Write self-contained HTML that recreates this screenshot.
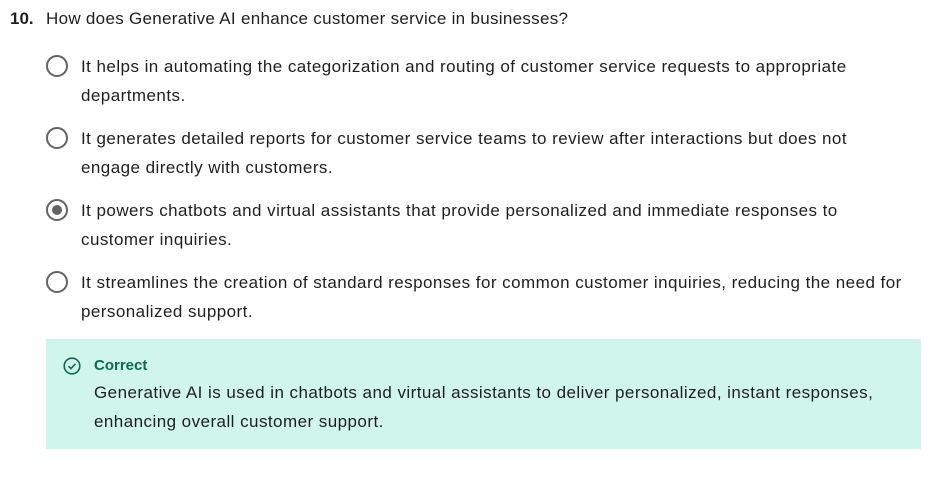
<!DOCTYPE html>
<html><head><style>
body{margin:0;width:939px;height:478px;background:#fff;font-family:"Liberation Sans",sans-serif;color:#1f1f1f;font-size:17px;letter-spacing:0.45px;position:relative;overflow:hidden}
.a{position:absolute;white-space:nowrap}
.r{position:absolute;width:18px;height:18px;border:2px solid #636363;border-radius:50%;left:46px}
.r.s::after{content:"";position:absolute;left:4px;top:4px;width:10px;height:10px;border-radius:50%;background:#636363}
.box{position:absolute;left:46px;top:339px;width:875px;height:110px;background:#d0f6ec}
</style></head><body>
<div class="a" style="left:10px;top:9px;letter-spacing:0"><b>10.</b></div>
<div class="a" style="left:46px;top:9px;letter-spacing:0.3px">How does Generative AI enhance customer service in businesses?</div>

<div class="r" style="top:55px"></div>
<div class="a" style="left:81px;top:57px">It helps in automating the categorization and routing of customer service requests to appropriate</div>
<div class="a" style="left:81px;top:86px">departments.</div>

<div class="r" style="top:127px"></div>
<div class="a" style="left:81px;top:129px">It generates detailed reports for customer service teams to review after interactions but does not</div>
<div class="a" style="left:81px;top:158px">engage directly with customers.</div>

<div class="r s" style="top:199px"></div>
<div class="a" style="left:81px;top:201px">It powers chatbots and virtual assistants that provide personalized and immediate responses to</div>
<div class="a" style="left:81px;top:230px">customer inquiries.</div>

<div class="r" style="top:271px"></div>
<div class="a" style="left:81px;top:273px">It streamlines the creation of standard responses for common customer inquiries, reducing the need for</div>
<div class="a" style="left:81px;top:302px">personalized support.</div>

<div class="box"></div>
<svg class="a" style="left:63px;top:357px" width="18" height="18" viewBox="0 0 18 18"><circle cx="9" cy="9" r="7.8" fill="none" stroke="#0b6b4a" stroke-width="1.6"/><path d="M5.5 9.2l2.4 2.4 4.6-4.8" fill="none" stroke="#0b6b4a" stroke-width="1.6"/></svg>
<div class="a" style="left:94px;top:357px;color:#0b6b4a;font-weight:bold;font-size:15px;letter-spacing:0">Correct</div>
<div class="a" style="left:94px;top:383px">Generative AI is used in chatbots and virtual assistants to deliver personalized, instant responses,</div>
<div class="a" style="left:94px;top:412px">enhancing overall customer support.</div>
</body></html>
